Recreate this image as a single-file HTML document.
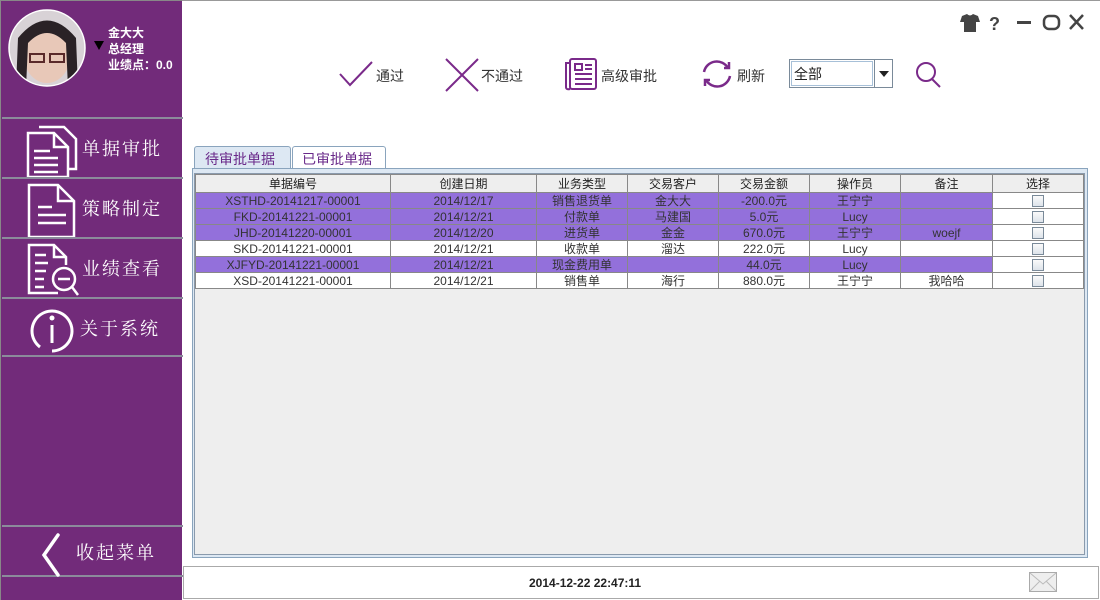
<!DOCTYPE html>
<html><head><meta charset="utf-8"><style>
*{margin:0;padding:0;box-sizing:border-box}
body{width:1100px;height:600px;background:#fff;position:relative;overflow:hidden;font-family:"Liberation Sans","Noto Sans CJK SC",sans-serif}
.side{position:absolute;left:0;top:0;width:182px;height:600px;background:#722b7a;border-left:1px solid #888;border-top:1px solid #888}
.item{position:absolute;left:1px;width:181px;height:60px;border-top:2px solid #8b8b9b;color:#fff;font-family:"Noto Serif CJK SC","WenQuanYi Zen Hei",serif;font-size:18px}
.item span{position:absolute;left:80px;top:16px;letter-spacing:2px}
.item svg{position:absolute}
.topline{position:absolute;left:182px;top:0;width:918px;height:1px;background:#999}
.tb{position:absolute;font-size:14px;color:#333;top:66px}
table{border-collapse:collapse;font-size:12px;position:absolute;left:195px;top:174px;table-layout:fixed}
td,th{border:1px solid #888;height:16px;text-align:center;font-weight:normal;color:#333;padding:0;line-height:14px;white-space:nowrap;overflow:hidden;background:#fff}
th{background:#eeeeee;height:18px;color:#222}
tr.p td{background:#9370db;color:#333}
tr.p td.w{background:#fff}
.cb{display:inline-block;width:12px;height:12px;border:1px solid #7a8a99;background:linear-gradient(#fafafa,#dde3ea);vertical-align:middle}
</style></head><body>
<div class="topline"></div>
<div class="side">
  <svg style="position:absolute;left:7px;top:7px" width="78" height="80"><defs><clipPath id="c"><circle cx="39" cy="40" r="38"/></clipPath></defs><g clip-path="url(#c)"><rect width="78" height="80" fill="#d8d2d6"/><ellipse cx="39" cy="45" rx="24" ry="30" fill="#e8c8b8"/><path d="M8 80 L10 30 Q39 -5 68 30 L70 80 L60 80 L58 35 Q39 15 20 35 L18 80Z" fill="#2a2226"/><rect x="22" y="46" width="14" height="8" fill="none" stroke="#5a2a2a" stroke-width="2"/><rect x="42" y="46" width="14" height="8" fill="none" stroke="#5a2a2a" stroke-width="2"/></g><circle cx="39" cy="40" r="38" fill="none" stroke="#fff" stroke-width="1.5"/></svg>
  <div style="position:absolute;left:93px;top:40px;width:0;height:0;border-left:5px solid transparent;border-right:5px solid transparent;border-top:9px solid #000"></div>
  <div style="position:absolute;left:107px;top:24px;color:#fff;font-size:12px;font-weight:bold;line-height:16px">金大大<br>总经理<br>业绩点：0.0</div>
  <div class="item" style="top:116px"><svg width="60" height="60" style="left:22px;top:2px" fill="none" stroke="#fff" stroke-width="2.5"><path d="M15 6 H40 L52 18 V48 H45"/><path d="M4 12 H30 L44 26 V56 H4Z"/><path d="M30 12 V26 H44"/><path d="M10 30H26M10 37H34M10 44H34M10 51H34"/></svg><span>单据审批</span></div>
  <div class="item" style="top:176px"><svg width="60" height="60" style="left:24px;top:2px" fill="none" stroke="#fff" stroke-width="2.5"><path d="M3 4 H32 L48 20 V56 H3Z"/><path d="M32 4 V20 H48"/><path d="M12 26H26M12 34H40M12 42H40"/></svg><span>策略制定</span></div>
  <div class="item" style="top:236px"><svg width="60" height="60" style="left:24px;top:2px" fill="none" stroke="#fff" stroke-width="2.5"><path d="M32 52 H3 V4 H28 L40 16 V24"/><path d="M28 4 V16 H40"/><path d="M9 14H20M9 22H22M9 30H20M9 38H18M9 46H18"/><circle cx="38" cy="38" r="11"/><path d="M32 38H44M46 46L52 54"/></svg><span>业绩查看</span></div>
  <div class="item" style="top:296px;height:60px;border-bottom:2px solid #8b8b9b"><svg width="60" height="60" style="left:26px;top:4px" fill="none" stroke="#fff" stroke-width="3"><path d="M12 44 A20 20 0 1 1 24 48"/><circle cx="24" cy="15" r="2.5" fill="#fff" stroke="none"/><path d="M24 22V40"/></svg><span style="left:78px">关于系统</span></div>
  <div class="item" style="top:524px;height:52px;border-bottom:2px solid #8b8b9b"><svg width="30" height="50" style="left:36px;top:4px" fill="none" stroke="#fff" stroke-width="3.5" stroke-linecap="round"><path d="M20 4 L6 24 L20 44"/></svg><span style="left:74px;top:12px">收起菜单</span></div>
</div>
<svg style="position:absolute;left:958px;top:12px" width="130" height="22"><path d="M4 4 L9 2 Q12 5 15 2 L20 4 L22 10 L18 10 L18 20 L6 20 L6 10 L2 10Z" fill="#444"/><text x="31" y="18" font-size="18" font-weight="bold" fill="#444" font-family="Liberation Sans">?</text><rect x="59" y="9" width="14" height="3" fill="#444"/><rect x="86" y="4" width="15" height="13" rx="5" fill="none" stroke="#444" stroke-width="2.5"/><path d="M112 3 L125 17 M125 3 L112 17" stroke="#444" stroke-width="2.5"/></svg>
<svg style="position:absolute;left:338px;top:58px" width="36" height="30" fill="none" stroke="#7a2a8a" stroke-width="2"><path d="M2 16 L12 27 L34 4"/></svg>
<div class="tb" style="left:376px">通过</div>
<svg style="position:absolute;left:444px;top:57px" width="36" height="36" stroke="#7a2a8a" stroke-width="2"><path d="M2 2 L34 34 M34 2 L2 34"/></svg>
<div class="tb" style="left:481px">不通过</div>
<svg style="position:absolute;left:564px;top:57px" width="36" height="36" fill="none" stroke="#7a2a8a" stroke-width="2"><rect x="6" y="2" width="26" height="30" rx="2"/><path d="M6 6 H2 V30 Q2 33 6 32"/><rect x="11" y="7" width="7" height="6"/><path d="M21 8H28M21 12H28M11 17H28M11 22H28M11 27H28"/></svg>
<div class="tb" style="left:601px">高级审批</div>
<svg style="position:absolute;left:700px;top:58px" width="34" height="32" fill="none" stroke="#7a2a8a" stroke-width="2.5"><path d="M4 14 A13 13 0 0 1 28 10"/><path d="M30 18 A13 13 0 0 1 6 22"/><path d="M24 10 H29 V4" /><path d="M10 22 H5 V28"/></svg>
<div class="tb" style="left:737px">刷新</div>
<div style="position:absolute;left:789px;top:59px;width:104px;height:29px;border:1px solid #7a8a99;background:#fff"><div style="position:absolute;left:1px;top:1px;width:82px;height:25px;border:1px solid #a7c0d8;font-size:14px;padding:2px 2px;color:#222">全部</div><div style="position:absolute;left:84px;top:0;width:1px;height:27px;background:#7a8a99"></div><div style="position:absolute;left:89px;top:11px;border-left:5px solid transparent;border-right:5px solid transparent;border-top:6px solid #222"></div></div>
<svg style="position:absolute;left:914px;top:61px" width="28" height="28" fill="none" stroke="#7a2a8a" stroke-width="2"><circle cx="12" cy="11" r="9"/><path d="M18 18 L26 26"/></svg>
<div style="position:absolute;left:194px;top:146px;width:97px;height:24px;background:#dde8f3;border:1px solid #8aa4bd;border-bottom:none;border-radius:3px 3px 0 0;font-size:14px;color:#6a2a8a;padding:2px 0 0 10px">待审批单据</div>
<div style="position:absolute;left:292px;top:146px;width:94px;height:22px;background:#fff;border:1px solid #8aa4bd;border-bottom:none;border-radius:3px 3px 0 0;font-size:14px;color:#6a2a8a;padding:2px 0 0 9px">已审批单据</div>
<div style="position:absolute;left:192px;top:168px;width:896px;height:390px;border:1px solid #8aa4bd;background:#dde8f3"></div>
<div style="position:absolute;left:194px;top:173px;width:891px;height:382px;border:1px solid #8a9aac;background:#eeeeee"></div>
<table>
<colgroup><col style="width:195px"><col style="width:146px"><col style="width:91px"><col style="width:91px"><col style="width:91px"><col style="width:91px"><col style="width:92px"><col style="width:91px"></colgroup>
<tr><th>单据编号</th><th>创建日期</th><th>业务类型</th><th>交易客户</th><th>交易金额</th><th>操作员</th><th>备注</th><th>选择</th></tr>
<tr class="p"><td>XSTHD-20141217-00001</td><td>2014/12/17</td><td>销售退货单</td><td>金大大</td><td>-200.0元</td><td>王宁宁</td><td></td><td class="w"><span class="cb"></span></td></tr>
<tr class="p"><td>FKD-20141221-00001</td><td>2014/12/21</td><td>付款单</td><td>马建国</td><td>5.0元</td><td>Lucy</td><td></td><td class="w"><span class="cb"></span></td></tr>
<tr class="p"><td>JHD-20141220-00001</td><td>2014/12/20</td><td>进货单</td><td>金金</td><td>670.0元</td><td>王宁宁</td><td>woejf</td><td class="w"><span class="cb"></span></td></tr>
<tr><td>SKD-20141221-00001</td><td>2014/12/21</td><td>收款单</td><td>溜达</td><td>222.0元</td><td>Lucy</td><td></td><td><span class="cb"></span></td></tr>
<tr class="p"><td>XJFYD-20141221-00001</td><td>2014/12/21</td><td>现金费用单</td><td></td><td>44.0元</td><td>Lucy</td><td></td><td class="w"><span class="cb"></span></td></tr>
<tr><td>XSD-20141221-00001</td><td>2014/12/21</td><td>销售单</td><td>海行</td><td>880.0元</td><td>王宁宁</td><td>我哈哈</td><td><span class="cb"></span></td></tr>
</table>
<div style="position:absolute;left:183px;top:566px;width:916px;height:33px;border:1px solid #aaa;background:#fff"></div>
<div style="position:absolute;left:529px;top:576px;font-size:12px;font-weight:bold;color:#222">2014-12-22 22:47:11</div>
<svg style="position:absolute;left:1029px;top:572px" width="28" height="20"><rect x="0.5" y="0.5" width="27" height="19" fill="#eee" stroke="#aaa"/><path d="M1 1 L14 12 L27 1 M1 19 L11 9 M27 19 L17 9" stroke="#bbb" fill="none"/></svg>
</body></html>
